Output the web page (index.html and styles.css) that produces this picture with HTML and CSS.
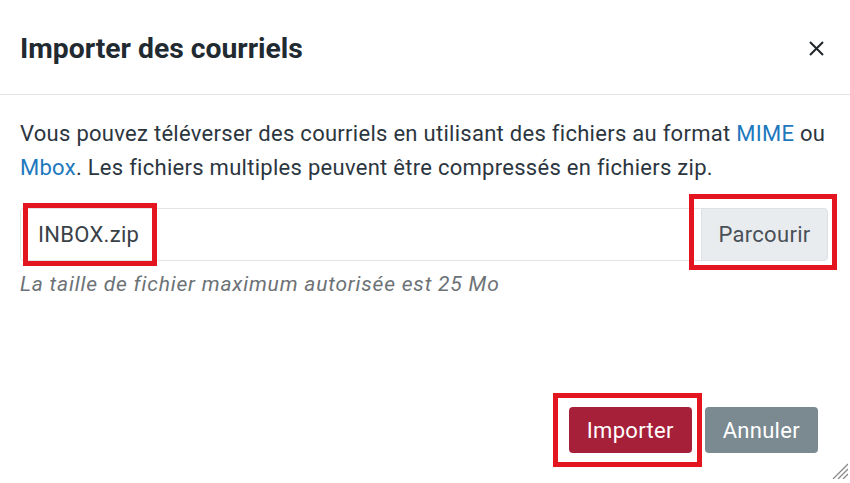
FILE: index.html
```html
<!DOCTYPE html>
<html lang="fr">
<head>
<meta charset="utf-8">
<title>Importer des courriels</title>
<link rel="stylesheet" href="styles.css">
</head>
<body>
<div class="dialog">
  <div class="header">
    <h1 class="title">Importer des courriels</h1>
    <button class="close" aria-label="Fermer">
      <svg width="15" height="15" viewBox="0 0 15 15"><path d="M1 1L14 14M14 1L1 14" stroke="#1f2529" stroke-width="2" fill="none"/></svg>
    </button>
  </div>
  <div class="content">
    <p class="intro">Vous pouvez téléverser des courriels en utilisant des fichiers au format <a href="#">MIME</a> ou <a href="#">Mbox</a>. Les fichiers multiples peuvent être compressés en fichiers zip.</p>
    <div class="file-group">
      <div class="file-name">INBOX.zip</div>
      <div class="browse">Parcourir</div>
    </div>
    <div class="hint">La taille de fichier maximum autorisée est 25 Mo</div>
  </div>
  <div class="footer">
    <button class="btn btn-primary">Importer</button>
    <button class="btn btn-secondary">Annuler</button>
  </div>
  <span class="mark mark-file"></span>
  <span class="mark mark-browse"></span>
  <span class="mark mark-import"></span>
  <svg class="grip" width="16" height="16" viewBox="0 0 16 16"><path d="M16 1L1 16M16 6L6 16M16 11L11 16" stroke="#8a8a8a" stroke-width="1.3" fill="none"/></svg>
</div>
</body>
</html>
```

FILE: styles.css
```css
html, body {
  margin: 0;
  padding: 0;
  background: #ffffff;
}
body {
  font-family: Roboto, "Liberation Sans", sans-serif;
  color: #2c363f;
}
.dialog {
  position: relative;
  width: 850px;
  height: 483px;
  display: flex;
  flex-direction: column;
  box-sizing: border-box;
}
.header {
  height: 95px;
  box-sizing: border-box;
  border-bottom: 1px solid #e3e4e5;
  display: flex;
  align-items: center;
  justify-content: space-between;
  padding: 2px 26px 0 20px;
}
.title {
  margin: 0;
  font-size: 28.3px;
  font-weight: 700;
  color: #212a31;
}
.close {
  border: 0;
  background: none;
  padding: 0;
  width: 15px;
  height: 15px;
  display: flex;
}
.content {
  padding: 22px 20px 0 20px;
}
.intro {
  margin: 0;
  font-size: 22px;
  letter-spacing: 0.28px;
  line-height: 34px;
}
.intro a {
  color: #1d78bd;
  text-decoration: none;
}
.file-group {
  display: flex;
  height: 53px;
  margin-top: 23px;
  margin-right: 2px;
}
.file-name {
  flex: 1;
  display: flex;
  align-items: center;
  padding-left: 17px;
  border: 1px solid #e2e5e8;
  border-right: 0;
  border-radius: 4px 0 0 4px;
  font-size: 22px;
  letter-spacing: 0.3px;
  color: #3a4248;
}
.browse {
  width: 127px;
  box-sizing: border-box;
  display: flex;
  align-items: center;
  justify-content: center;
  background: #e9ecef;
  border: 1px solid #dde1e5;
  border-radius: 0 4px 4px 0;
  font-size: 22px;
  letter-spacing: 0.3px;
  color: #495057;
}
.hint {
  margin-top: 9px;
  font-size: 21px;
  letter-spacing: 0.8px;
  line-height: 28px;
  font-style: italic;
  color: #6c7276;
}
.footer {
  margin-top: auto;
  display: flex;
  justify-content: flex-end;
  gap: 13px;
  padding: 0 32px 30px 0;
}
.btn {
  height: 46px;
  border: 0;
  border-radius: 4px;
  padding: 0 18px;
  font-family: Roboto, "Liberation Sans", sans-serif;
  font-size: 22px;
  letter-spacing: 0.3px;
  color: #ffffff;
}
.btn-primary {
  background: #a72039;
}
.btn-secondary {
  background: #7b8a91;
}
.mark {
  position: absolute;
  box-sizing: border-box;
  border: 5px solid #e3151f;
}
.mark-file {
  left: 23px;
  top: 203px;
  width: 134px;
  height: 63px;
}
.mark-browse {
  left: 689px;
  top: 194px;
  width: 148px;
  height: 76px;
}
.mark-import {
  left: 553px;
  top: 393px;
  width: 149px;
  height: 74px;
}
.grip {
  position: absolute;
  left: 832px;
  top: 463px;
}
```
